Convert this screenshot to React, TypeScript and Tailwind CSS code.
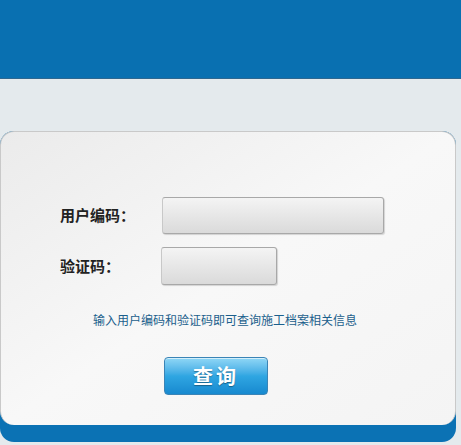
export default function App() {
  return (
    <div className="w-[461px] h-[445px] overflow-hidden bg-[#e4eaed] font-['Noto_Sans_CJK_SC',sans-serif]">
      <div className="h-[79px] bg-[#0970b1] border-b-[1px] border-[#2d6790]" />
      <div className="pt-[52px] pr-[5px]">
        <div className="rounded-[14px] bg-[#0b72b4] pb-[17px]">
          <div className="rounded-[14px] border border-[#c9c9c9] border-b-0 bg-gradient-to-br from-[#ebebeb] via-[#f8f8f8] to-[#f4f4f4] pt-[65px] pb-[30px]">
            <div className="flex items-center pl-[59px]">
              <span className="w-[102px] text-[15px] font-bold text-[#222]">用户编码：</span>
              <div className="h-[37px] w-[222px] rounded-[3px] border border-[#a8a8a8] border-l-[#c8c8c8] bg-gradient-to-b from-[#f4f4f4] to-[#dadada] shadow-[1px_1px_1px_rgba(0,0,0,0.15)]" />
            </div>
            <div className="mt-[13px] flex items-center pl-[59px]">
              <span className="w-[101px] text-[15px] font-bold text-[#222]">验证码：</span>
              <div className="h-[38px] w-[116px] rounded-[3px] border border-[#a8a8a8] border-l-[#c8c8c8] bg-gradient-to-b from-[#f4f4f4] to-[#dadada] shadow-[1px_1px_1px_rgba(0,0,0,0.15)]" />
            </div>
            <p className="mt-[27px] pl-[92px] text-[12px] leading-[16px] text-[#1b5f8c]">
              输入用户编码和验证码即可查询施工档案相关信息
            </p>
            <div className="mt-[29px] pl-[163px]">
              <button className="flex h-[38px] w-[104px] items-center justify-center rounded-[4px] border border-[#3a84b6] bg-gradient-to-b from-[#8fd7f6] via-[#2fa6e2] to-[#1789cf] text-[20px] font-bold tracking-[3px] text-white shadow-[inset_0_1px_0_rgba(255,255,255,0.6)] [text-shadow:0_1px_1px_rgba(0,0,0,0.35)]">
                查询
              </button>
            </div>
          </div>
        </div>
      </div>
    </div>
  );
}
